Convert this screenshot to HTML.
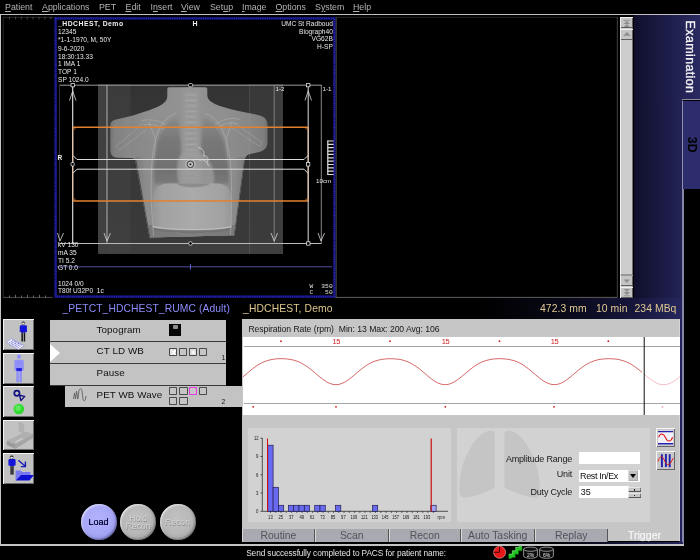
<!DOCTYPE html>
<html><head><meta charset="utf-8"><title>Examination</title>
<style>
html,body{margin:0;padding:0;background:#000;}
body{will-change:transform;width:700px;height:560px;position:relative;overflow:hidden;font-family:"Liberation Sans",sans-serif;color:#c0c0c0;}
.a{position:absolute;white-space:nowrap;}
.menu{position:absolute;top:1.8px;font-size:8.8px;line-height:11px;color:#b4b4b4;white-space:nowrap;}
.menu u{text-decoration:underline;}
.it{position:absolute;font-size:6.6px;line-height:8px;color:#e8e8e8;white-space:nowrap;}
.row{position:absolute;background:#c3c3c3;height:20.5px;}
.row span{position:absolute;left:46.5px;top:4px;font-size:9.8px;line-height:12px;color:#101010;letter-spacing:0.1px;white-space:nowrap;}
.sq{position:absolute;width:6.3px;height:5.9px;border:1.1px solid #4c4c4c;border-radius:0.8px;background:#c6c6c6;}
.ib{position:absolute;left:3px;width:31px;height:30.7px;background:#c2c2c2;box-shadow:inset 1px 1px 0 #f4f4f4, inset -1px -1px 0 #6a6a6a;}
.tab{position:absolute;top:529px;height:12.5px;background:#a9a9b1;color:#52525a;font-size:10.4px;line-height:13.6px;text-align:center;box-shadow:inset 1px 0 0 #d8d8d8, inset -1px 0 0 #555;}
.lbl{position:absolute;font-size:9px;line-height:12px;color:#202020;text-align:right;white-space:nowrap;letter-spacing:-0.2px;}
.rb{position:absolute;top:504px;width:36px;height:36px;border-radius:50%;font-size:8.6px;text-align:center;}

</style></head>
<body>
<!-- menu bar -->
<div class="menu" style="left:5px"><u>P</u>atient</div>
<div class="menu" style="left:42px"><u>A</u>pplications</div>
<div class="menu" style="left:99px">PET</div>
<div class="menu" style="left:125.5px"><u>E</u>dit</div>
<div class="menu" style="left:150.5px">I<u>n</u>sert</div>
<div class="menu" style="left:181px"><u>V</u>iew</div>
<div class="menu" style="left:210px">Set<u>u</u>p</div>
<div class="menu" style="left:242px"><u>I</u>mage</div>
<div class="menu" style="left:275.5px"><u>O</u>ptions</div>
<div class="menu" style="left:315px">S<u>y</u>stem</div>
<div class="menu" style="left:353px"><u>H</u>elp</div>
<div class="a" style="left:0;top:13.7px;width:700px;height:1.4px;background:#c0c0c0"></div>
<div class="a" style="left:0;top:14px;width:1.1px;height:531px;background:#c4c4c4"></div>

<!-- right navy panel -->
<div class="a" style="left:634px;top:15px;width:66px;height:85px;background:linear-gradient(90deg,#0f0f2b 0%,#1a1a44 40%,#2a2a62 100%)"></div>
<div class="a" style="left:634px;top:100px;width:49px;height:198px;background:linear-gradient(90deg,#0f0f2b 0%,#1a1a43 54%,#232356 100%)"></div>
<div class="a" style="left:682px;top:100px;width:18px;height:89px;background:#2d2d6d;border-left:1.4px solid #9090a8;border-top:1.5px solid #000;box-sizing:border-box"></div>
<div class="a" style="left:682px;top:99px;width:18px;height:1.2px;background:#8c8ca4"></div>
<div class="a" style="left:682px;top:189px;width:1.9px;height:355.5px;background:#8686a6"></div>
<div class="a" style="left:684px;top:16px;width:14px;height:82px;"><div style="position:absolute;left:0;top:0;transform-origin:0 0;transform:translate(13.4px,4.6px) rotate(90deg);font-size:12.4px;letter-spacing:0.42px;-webkit-text-stroke:0.35px #f4f4f4;line-height:14px;color:#f4f4f4;white-space:nowrap;">Examination</div></div>
<div class="a" style="left:684px;top:136px;width:14px;height:20px;"><div style="position:absolute;left:0;top:0;transform-origin:0 0;transform:translate(14.6px,0.8px) rotate(90deg);font-weight:bold;font-size:12.3px;line-height:14px;color:#000;white-space:nowrap;">3D</div></div>

<!-- scrollbar -->
<div class="a" style="left:620.2px;top:17px;width:13.2px;height:280.5px;background:#cdcdcd;box-shadow:inset 1px 0 0 #f0f0f0, inset -1px 0 0 #707070"></div>
<div class="a" style="left:620.2px;top:17px;width:13.2px;height:11.2px;background:#c4c4c4;box-shadow:inset 1px 1px 0 #f0f0f0, inset -1px -1px 0 #606060"></div>
<div class="a" style="left:620.2px;top:28.5px;width:13.2px;height:11.2px;background:#c4c4c4;box-shadow:inset 1px 1px 0 #f0f0f0, inset -1px -1px 0 #606060"></div>
<div class="a" style="left:620.2px;top:275px;width:13.2px;height:11.2px;background:#c4c4c4;box-shadow:inset 1px 1px 0 #f0f0f0, inset -1px -1px 0 #606060"></div>
<div class="a" style="left:620.2px;top:286.5px;width:13.2px;height:11.2px;background:#c4c4c4;box-shadow:inset 1px 1px 0 #f0f0f0, inset -1px -1px 0 #606060"></div>
<svg class="a" style="left:0;top:0" width="700" height="560" viewBox="0 0 700 560">
 <g fill="#8e8e8e">
  <path d="M623.6,24 L630,24 L626.8,21 Z M623.6,27.1 L630,27.1 L626.8,24 Z"/>
  <rect x="623.6" y="19.9" width="6.4" height="0.9"/>
  <path d="M623.3,35.8 L630.5,35.8 L626.9,32 Z"/>
  <path d="M623.6,279.5 L630,279.5 L626.8,283 Z"/>
  <path d="M623.6,289 L630,289 L626.8,292.1 Z M623.6,292.1 L630,292.1 L626.8,295.2 Z"/>
  <rect x="623.6" y="295.4" width="6.4" height="0.9"/>
  <rect x="620.7" y="274.6" width="12" height="0.9" fill="#444"/>
 </g>
</svg>
<svg class="a" style="left:0;top:0" width="700" height="560" viewBox="0 0 700 560">
 <defs>
  <linearGradient id="bgv" x1="0" y1="0" x2="0" y2="1">
   <stop offset="0" stop-color="#333333"/><stop offset="0.3" stop-color="#373737"/><stop offset="1" stop-color="#3a3a3a"/>
  </linearGradient>
  <linearGradient id="bodyh" x1="110" y1="0" x2="268" y2="0" gradientUnits="userSpaceOnUse">
   <stop offset="0" stop-color="#707070"/><stop offset="0.03" stop-color="#7e7e7e"/><stop offset="0.12" stop-color="#878787"/><stop offset="0.3" stop-color="#8e8e8e"/><stop offset="0.5" stop-color="#949494"/><stop offset="0.7" stop-color="#8e8e8e"/><stop offset="0.88" stop-color="#878787"/><stop offset="0.97" stop-color="#7e7e7e"/><stop offset="1" stop-color="#707070"/>
  </linearGradient>
  <linearGradient id="torsoh" x1="135" y1="0" x2="245" y2="0" gradientUnits="userSpaceOnUse">
   <stop offset="0" stop-color="#7a7a7a"/><stop offset="0.1" stop-color="#8c8c8c"/><stop offset="0.5" stop-color="#969696"/><stop offset="0.9" stop-color="#8c8c8c"/><stop offset="1" stop-color="#7a7a7a"/>
  </linearGradient>
  <linearGradient id="domeh" x1="153" y1="0" x2="232" y2="0" gradientUnits="userSpaceOnUse">
   <stop offset="0" stop-color="#969696"/><stop offset="0.12" stop-color="#a2a2a2"/><stop offset="0.5" stop-color="#aaaaaa"/><stop offset="0.88" stop-color="#a2a2a2"/><stop offset="1" stop-color="#969696"/>
  </linearGradient>
  <linearGradient id="lungv" x1="0" y1="118" x2="0" y2="184" gradientUnits="userSpaceOnUse"><stop offset="0" stop-color="#707070" stop-opacity="0.3"/><stop offset="0.35" stop-color="#666666" stop-opacity="0.6"/><stop offset="0.8" stop-color="#626262" stop-opacity="0.68"/><stop offset="1" stop-color="#686868" stop-opacity="0.55"/></linearGradient>
  <radialGradient id="lungL" cx="0.55" cy="0.55" r="0.6"><stop offset="0" stop-color="#606060"/><stop offset="0.7" stop-color="#6a6a6a"/><stop offset="1" stop-color="#767676"/></radialGradient>
  <filter id="b1" x="-20%" y="-20%" width="140%" height="140%"><feGaussianBlur stdDeviation="1"/></filter>
  <filter id="b2" x="-20%" y="-20%" width="140%" height="140%"><feGaussianBlur stdDeviation="1.6"/></filter>
  <filter id="b3" x="-30%" y="-30%" width="160%" height="160%"><feGaussianBlur stdDeviation="5"/></filter>
  <clipPath id="bodyclip"><path d="M169,87.3 Q167.3,87.3 167.3,89 L167.3,96 C167.5,103 160,106 150,110 C140,113.5 128,117 116,119.5 C112,120.5 110.3,122 110.3,126 L110.3,150 C110.3,155 113,157.5 118,157.8 L131,158 C134,158 135,159.5 135.5,162 L149.5,237.5 L234.5,235.2 L244.5,162 C245,157.5 246,155 250,154 L258,152.3 C264,151 267.5,148 267.5,143 L267.5,125 C267.5,120 265,117 260,115.5 C250,113 240,111.5 232,109.5 C220,106.5 208,103 207.3,96 L207.3,89 Q207.3,87.3 205.5,87.3 Z"/></clipPath>
 </defs>
 <!-- gray detector rect -->
 <rect x="98" y="84.5" width="185" height="169.5" fill="url(#bgv)"/>
 <rect x="98" y="84.5" width="9" height="169.5" fill="#404040"/>
 <rect x="274.5" y="84.5" width="8.5" height="169.5" fill="#3d3d3d"/>
 <rect x="107" y="84.5" width="23.5" height="169.5" fill="#3c3c3c" opacity="0.5"/>
 <rect x="249.5" y="84.5" width="25" height="169.5" fill="#3e3e3e" opacity="0.5"/>
 <rect x="98" y="244" width="185" height="10" fill="#424242" opacity="0.5"/>
 <!-- body -->
 <g clip-path="url(#bodyclip)">
  <rect x="105" y="85" width="170" height="156" fill="url(#bodyh)"/>
  <!-- torso below arms -->
  <path d="M135.3,157 L149.5,238 L234.5,238 L245,157 Z" fill="url(#torsoh)"/>
  <!-- upper chest lighter -->
  <ellipse cx="189" cy="122" rx="50" ry="22" fill="#939393" opacity="0.55" filter="url(#b3)"/>
  <!-- lungs -->
  <g filter="url(#b2)">
  <path d="M177,118 C169,119 162,128 158,140 C154.5,152 153.5,168 154,184 L182,184 C182,160 182,135 177,118 Z" fill="url(#lungv)"/>
  <path d="M204,118 C212,119 219,128 223,140 C227,152 229,168 229,184 L201,184 C201,160 200,135 204,118 Z" fill="url(#lungv)"/>
  </g>
  <!-- spine -->
  <rect x="181.5" y="87" width="19" height="150" fill="#9a9a9a" opacity="0.5" filter="url(#b1)"/>
  <g stroke="#b8b8b8" stroke-width="0.7" opacity="0.35">
   <path d="M184,95H198M184,100.5H198M184,106H198M184,111.5H198M184,117H198M184,122.5H198M184,128H198M184,133.5H198M184,139H198M184,144.5H198M184,150H198M184,155.5H198M184,161H198M184,166.5H198M184,172H198M184,177.5H198M185,192H197M185,197.5H197M185,203H197M185,208.5H197M185,214H197M185,219.5H197"/>
   <path d="M186,92V225 M196,92V225" stroke-width="0.5"/>
  </g>
  <g fill="#b0b0b0" opacity="0.28"><rect x="186.5" y="93" width="9" height="3.6" rx="0.8"/><rect x="186.5" y="98.5" width="9" height="3.6" rx="0.8"/><rect x="186.5" y="104" width="9" height="3.6" rx="0.8"/><rect x="186.5" y="109.5" width="9" height="3.6" rx="0.8"/><rect x="186.5" y="115" width="9" height="3.6" rx="0.8"/><rect x="186.5" y="120.5" width="9" height="3.6" rx="0.8"/><rect x="186.5" y="126" width="9" height="3.6" rx="0.8"/><rect x="186.5" y="131.5" width="9" height="3.6" rx="0.8"/><rect x="186.5" y="137" width="9" height="3.6" rx="0.8"/><rect x="186.5" y="142.5" width="9" height="3.6" rx="0.8"/><rect x="186.5" y="148" width="9" height="3.6" rx="0.8"/><rect x="186.5" y="153.5" width="9" height="3.6" rx="0.8"/><rect x="186.5" y="171.5" width="9" height="3.6" rx="0.8"/><rect x="186.5" y="177" width="9" height="3.6" rx="0.8"/><rect x="186.5" y="190.5" width="9" height="3.6" rx="0.8"/><rect x="186.5" y="196" width="9" height="3.6" rx="0.8"/><rect x="186.5" y="201.5" width="9" height="3.6" rx="0.8"/><rect x="186.5" y="207" width="9" height="3.6" rx="0.8"/><rect x="186.5" y="212.5" width="9" height="3.6" rx="0.8"/><rect x="186.5" y="218" width="9" height="3.6" rx="0.8"/></g>
  <!-- heart -->
  <path d="M177.5,162 C176.5,172 177,182 181,186.5 C190,190 205,189.5 212.5,186 C215.5,180 214.5,168 208.5,160 C204,154 199,151 193,151 C185,151 178.5,154 177.5,162 Z" fill="#9c9c9c" opacity="0.8" filter="url(#b1)"/>
  <!-- below-dome shade -->
  <path d="M148,225 L236,225 L235,239 L149,239 Z" fill="#767676" opacity="0.8"/>
  <!-- abdomen dome -->
  <path d="M152.7,226.8 L152.7,202 C152.7,190 158,183.8 168,183.6 L217,183.6 C227,183.8 231.7,190 231.7,202 L231.7,226.8 C215,230.8 170,230.8 152.7,226.8 Z" fill="url(#domeh)"/>
  <path d="M177,183.5 C180,188.5 205,188.5 210,183.5 Z" fill="#858585" opacity="0.8"/>
  <path d="M152.7,226.6 C170,230.6 215,230.6 231.7,226.6" fill="none" stroke="#bcbcbc" stroke-width="1.1"/>
  <path d="M154,229.5 C172,233 213,233 230.5,229.5" fill="none" stroke="#6a6a6a" stroke-width="1" opacity="0.7"/>
  <path d="M175,231.5 C179,236.5 205,236.5 209,231.5" fill="none" stroke="#8e8e8e" stroke-width="0.6"/>
  <!-- torso dark edges -->
  <path d="M135.3,159 L149.5,238 M245,159 L234.6,236" stroke="#4a4a4a" stroke-width="1.6" fill="none"/>
  <!-- rib cage outline -->
  <g fill="none" stroke="#c0c0c0" stroke-width="0.8" opacity="0.55">
   <path d="M176,113.5 C166,116 159,126 155.5,140 C151.5,155 150.5,178 151.5,205 L153.5,236"/>
   <path d="M205,113.5 C215,116 222,126 226,140 C231,155 232,178 231.5,205 L230.5,235"/>
   <path d="M116,146.4 L142.8,123.6 M119.6,150 L146.4,129.5 M116,146.4 L119.6,150" stroke-width="0.7" opacity="0.8"/>
   <path d="M262,142.5 L234,122.5 M259.5,146.5 L231,127 M262,142.5 L259.5,146.5" stroke-width="0.7" opacity="0.8"/>
   <path d="M141,121 C150,118.5 158,120 166,125 M144,125 C152,123.5 159,125.5 165,130 M149,122 L155,138 C156,146 155,150 154,158" stroke-width="0.7"/>
   <path d="M240,119.5 C231,117 223,119 215,124.5 M237,123.5 C229,122 222,124.5 216,129 M232,121 L227,137 C226,146 227,150 228,158" stroke-width="0.7"/>
  </g>
  <!-- heart wires -->
  <path d="M198,147.5 C203,148.5 205,152 203.5,156 C207,155 209.5,158.5 207,162.5 M199.5,160.5 C203,158.5 207,161 208.5,166" fill="none" stroke="#e0e0e0" stroke-width="0.8" opacity="0.85"/>
 </g>
 <!-- vertical faint lines over image -->
 <rect x="107.5" y="84.5" width="23" height="169.5" fill="#fff" opacity="0.025"/>
 <rect x="249" y="84.5" width="0.8" height="169.5" fill="#aaa" opacity="0.22"/>

 <!-- FOV boxes -->
 <g fill="none" stroke="#9a9a9a" stroke-width="1">
  <path d="M59,85.2 H321.5"/>
  <path d="M59,243.5 H321.5" stroke="#b8b8b8"/>
  <path d="M107,85 V243.5" stroke="#b0b0b0"/>
  <path d="M274.2,85 V243.5" stroke="#909090" stroke-width="0.8"/>
  <path d="M321.3,85 V243.5" stroke="#a8a8a8" stroke-width="0.8"/>
  <path d="M59.5,85 V243.5" stroke="#303030"/>
 </g>
 <!-- white scan range lines -->
 <g fill="none" stroke="#e8e8e8" stroke-width="1.1">
  <path d="M72.7,85 V243.5"/>
  <path d="M308.2,85 V243.5" stroke="#c8c8c8"/>
  <path d="M73,155.5 L77,159.5 H304 L308,155.5" stroke="#dcdcdc" stroke-width="1"/>
  <path d="M73,173.2 L77,169.2 H304 L308,173.2" stroke="#dcdcdc" stroke-width="1"/>
 </g>
 <!-- orange box -->
 <g fill="none" stroke="#e2812f" stroke-width="1.5">
  <path d="M72.7,127.3 H308.2 M72.7,201 H308.2"/>
 </g>
 <g fill="none" stroke="#e6c8ac" stroke-width="1.1">
  <path d="M72.7,127.3 V201 M308.2,127.3 V201" />
 </g>
 <g fill="none" stroke="#e2812f" stroke-width="0.8">
  <path d="M73,130.5 L76,127.5 M308,130.5 L305,127.5 M73,197.5 L76,200.5 M308,197.5 L305,200.5"/>
 </g>
 <!-- arrows -->
 <g fill="none" stroke="#d8d8d8" stroke-width="0.8">
  <path d="M69.5,100.5 L72.7,91 L76,100.5"/>
  <path d="M305,100.5 L308.2,91 L311.5,100.5"/>
  <path d="M57.5,233 L60,241 L63.5,233"/>
  <path d="M104,233 L107,241 L110.5,233"/>
  <path d="M271,233 L274.2,241 L277.5,233"/>
  <path d="M318,233 L321,241 L324.5,233"/>
 </g>
 <!-- handles -->
 <g fill="#000" stroke="#e0e0e0" stroke-width="0.8">
  <rect x="71" y="83.6" width="3.4" height="3.2"/>
  <rect x="188.6" y="83.6" width="4" height="3.2" rx="1"/>
  <rect x="306.5" y="83.6" width="3.4" height="3.2"/>
  <rect x="71" y="162.5" width="3.2" height="3.6" rx="1"/>
  <rect x="306.6" y="162.5" width="3.2" height="3.6"/>
  <rect x="306.6" y="241.8" width="3.4" height="3.4"/>
  <circle cx="190.5" cy="243.5" r="1.8"/>
 </g>
 <!-- center marker -->
 <g fill="none" stroke="#222" stroke-width="0.7">
  <circle cx="190.4" cy="164.3" r="4.6" stroke="#d0d0d0"/>
  <circle cx="190.4" cy="164.3" r="3.3" stroke="#202020"/>
  <circle cx="190.4" cy="164.3" r="2.1" stroke="#e0e0e0"/>
  <circle cx="190.4" cy="164.3" r="0.8" fill="#111" stroke="none"/>
 </g>
 <!-- bottom blue line -->
 <rect x="57" y="266.3" width="275" height="1" fill="#5050a0"/>
 <rect x="190" y="264" width="1" height="5.5" fill="#6060c0"/>
 <!-- scale ruler (drawn after border below) -->
 <!-- blue dotted border -->
 <rect x="55.6" y="18.4" width="278.8" height="278.2" fill="none" stroke="#0e0e60" stroke-width="2.8"/>
 <rect x="55.6" y="18.4" width="278.8" height="278.2" fill="none" stroke="#2828b8" stroke-width="1.8" stroke-dasharray="1.1 1.1"/>
 <path d="M336.2,17 V297.5" stroke="#505050" stroke-width="0.9" fill="none"/>
 <path d="M336,17.3 H618" stroke="#303030" stroke-width="0.8" fill="none"/>
 <path d="M335.5,297.4 H617.5" stroke="#686868" stroke-width="0.9" fill="none"/>
 <path d="M617.3,17 V297.5" stroke="#484848" stroke-width="0.9" fill="none"/>
 <g stroke="#dedede" stroke-width="1.2" fill="none">
  <path d="M327.8,140.5 V175"/>
  <path d="M327.5,141H333.6 M327.5,144.4H333.6 M327.5,147.7H333.6 M327.5,151.1H333.6 M327.5,154.4H333.6 M327.5,157.8H333.6 M327.5,161.1H333.6 M327.5,164.5H333.6 M327.5,167.8H333.6 M327.5,171.2H333.6 M327.5,174.5H333.6"/>
 </g>
 <!-- ruler ticks top-left -->
 <g stroke="#5c5c5c" stroke-width="0.7">
  <path d="M3,17.3H53.5" stroke="#3a3a3a"/>
  <path d="M3.3,17V297.5" stroke="#333"/>
  <path d="M9.5,16.8V19.5 M15.4,16.8V19.5 M21.3,16.8V19.5 M27.2,16.8V19.5 M33.1,16.8V19.5 M39,16.8V19.5 M44.9,16.8V19.5 M50.8,16.8V19.5"/>
  <path d="M3,297.4H52.5" stroke="#6a6a6a"/>
  <path d="M9.5,295.5V297.8 M15.5,294.8V297.8 M21.5,295.5V297.8 M27.5,294.8V297.8 M33.5,295.5V297.8 M39.5,294.8V297.8 M45.5,295.5V297.8" stroke="#8a8a8a"/>
 </g>
</svg>
<!-- image text -->
<div class="it" style="left:58px;top:20px;font-weight:bold;font-size:6.8px;letter-spacing:0.5px;color:#f0f0f0">_HDCHEST, Demo</div>
<div class="it" style="left:58px;top:28px">12345</div>
<div class="it" style="left:58px;top:35.5px">*1-1-1970, M, 50Y</div>
<div class="it" style="left:58px;top:44.5px">9-6-2020</div>
<div class="it" style="left:58px;top:52.5px">18:30:13.33</div>
<div class="it" style="left:58px;top:60px">1 IMA 1</div>
<div class="it" style="left:58px;top:67.5px">TOP 1</div>
<div class="it" style="left:58px;top:75.8px">SP 1024.0</div>
<div class="it" style="left:192.6px;top:20.2px;font-weight:bold;font-size:7px;color:#f0f0f0">H</div>
<div class="it" style="right:367.2px;top:20px;text-align:right">UMC St Radboud</div>
<div class="it" style="right:367.2px;top:27.5px;text-align:right">Biograph40</div>
<div class="it" style="right:367.2px;top:35px;text-align:right">VG62B</div>
<div class="it" style="right:367.2px;top:42.5px;text-align:right">H-SP</div>
<div class="it" style="left:57.5px;top:153.5px;font-weight:bold;font-size:6.5px;color:#f0f0f0">R</div>
<div class="it" style="left:275.5px;top:84.8px;font-size:6.2px">1-2</div>
<div class="it" style="left:322.5px;top:84.8px;font-size:6.2px">1-1</div>
<div class="it" style="left:316px;top:177px;font-size:6.2px">10cm</div>
<div class="it" style="left:58px;top:241px">kV 130</div>
<div class="it" style="left:58px;top:249px">mA 35</div>
<div class="it" style="left:58px;top:256.7px">TI 5.2</div>
<div class="it" style="left:58px;top:264px">GT 0.0</div>
<div class="it" style="left:58px;top:279.8px">1024 0/0</div>
<div class="it" style="left:58px;top:287.2px">T80f U32P0&nbsp; 1c</div>
<div class="it" style="left:309.6px;top:283.8px;font-size:6.2px;line-height:5.7px;font-family:'Liberation Mono',monospace;letter-spacing:0.15px;color:#e4e4e4">W&nbsp; 350<br>C&nbsp;&nbsp; 50</div>


<!-- header row gradient (right part) -->
<div class="a" style="left:480px;top:298px;width:202px;height:21px;background:linear-gradient(90deg,#000 0%,#070714 35%,#0e0e28 58%,#17173e 78%,#26265e 100%)"></div>
<div class="a" style="left:679px;top:318px;width:3.2px;height:226px;background:#24245a"></div>
<div class="a" style="left:242px;top:541.5px;width:441px;height:2.7px;background:linear-gradient(90deg,#000 0%,#000 70%,#15153c 88%,#24245a 100%)"></div>
<div class="a" style="left:0;top:544.3px;width:683.8px;height:1.3px;background:#c4c4c4"></div>
<div class="a" style="left:62.5px;top:302px;font-size:10.3px;line-height:13px;color:#8c8cfc;letter-spacing:0.1px">_PETCT_HDCHEST_RUMC (Adult)</div>
<div class="a" style="left:243px;top:302px;font-size:10.3px;line-height:13px;color:#e0c890;letter-spacing:0.15px">_HDCHEST, Demo</div>
<div class="a" style="left:540px;top:302px;font-size:10.4px;line-height:13px;color:#e0c890;letter-spacing:0.05px">472.3 mm</div>
<div class="a" style="left:596px;top:302px;font-size:10.4px;line-height:13px;color:#e0c890;letter-spacing:0.05px">10 min</div>
<div class="a" style="left:634.5px;top:302px;font-size:10.4px;line-height:13px;color:#e0c890;letter-spacing:0.05px">234 MBq</div>

<!-- left icon buttons -->
<div class="ib" style="top:319.2px"></div>
<div class="ib" style="top:353px"></div>
<div class="ib" style="top:386.2px"></div>
<div class="ib" style="top:419.6px"></div>
<div class="ib" style="top:453px"></div>
<svg class="a" style="left:0;top:0" width="700" height="560" viewBox="0 0 700 560">
 <!-- icon 1: person + keyboard -->
 <g>
  <circle cx="23.3" cy="323.2" r="1.5" fill="#f0f0f0" stroke="#111" stroke-width="0.5"/><path d="M21.9,322.6 A1.5,1.5 0 0 1 24.7,322.6 Z" fill="#111"/>
  <path d="M20.8,325.3 H25.8 Q26.8,325.3 26.9,326.5 L27,332 H25.7 L25.6,328.5 V332.8 H21 V328.5 L20.9,332 H19.7 L19.8,326.5 Q19.9,325.3 20.8,325.3 Z" fill="#1414d8"/>
  <path d="M21.4,332.8 H22.9 V341.5 H21.4 Z M23.7,332.8 H25.2 V341.5 H23.7 Z" fill="#141414"/>
  <path d="M6.3,342.3 L11.5,338.6 L24.3,345.6 L18.6,349.4 Z" fill="#f6f6fc" stroke="#7070d8" stroke-width="0.5"/>
  <path d="M9.2,342.3 L18.8,347.5 M10.8,341.2 L20.5,346.4 M12.3,340.2 L22,345.3" stroke="#4040c0" stroke-width="0.8" stroke-dasharray="1.1 0.5"/>
 </g>
 <!-- icon 2: light-blue person -->
 <g fill="#9090f8">
  <circle cx="19" cy="356.7" r="2.1"/>
  <path d="M15.8,359.8 H22.4 Q23.8,359.8 23.8,361.3 V370.5 H21.9 V382.3 H19.4 V372 H18.8 V382.3 H16.3 V370.5 H14.4 V361.3 Q14.4,359.8 15.8,359.8 Z"/>
 </g>
 <path d="M16.3,368 H21.9 V371 H16.3 Z" fill="#2424dc"/>
 <path d="M17.5,363.5 h1 M19.8,363.5 h1" stroke="#7070e0" stroke-width="0.7"/>
 <!-- icon 3: marker + green ball -->
 <circle cx="16.9" cy="393.3" r="2.6" fill="none" stroke="#101080" stroke-width="1.7"/>
 <path d="M19.6,395.2 L24.7,396.4 L20.9,400.6 Z" fill="none" stroke="#101080" stroke-width="1.4" stroke-linejoin="round"/>
 <circle cx="18.8" cy="409" r="5.3" fill="#2ad82a"/>
 <circle cx="18" cy="408" r="3" fill="#7cf47c" opacity="0.75" filter="url(#ib1)"/>
 <defs><filter id="ib1"><feGaussianBlur stdDeviation="0.9"/></filter></defs>
 <!-- icon 4: greyed scanner table -->
 <g stroke="#a2a2a2" stroke-width="0.3">
  <path d="M19,422.3 L23.8,424.3 V433.5 L19,431.3 Z" fill="#b2b2b2"/>
  <path d="M23.8,424.3 L24.8,423.9 V432.8 L23.8,433.5 Z" fill="#d0d0d0"/>
  <path d="M7,441 L26,431.8 L33,434.6 L15.5,444.8 Z" fill="#b0b0b0"/>
  <path d="M7,441 L15.5,444.8 V448.8 L7,445 Z" fill="#9a9a9a"/>
  <path d="M15.5,444.8 L33,434.6 V437.6 L15.5,448.8 Z" fill="#a4a4a4"/>
  <path d="M14,442 L22,437.8 L24,438.8 L16,443 Z" fill="#d4d4d4" opacity="0.8"/>
 </g>
 <!-- icon 5: person to folder -->
 <g>
  <circle cx="11.7" cy="457.3" r="1.6" fill="#f0f0f0" stroke="#111" stroke-width="0.5"/><path d="M10.2,456.7 A1.6,1.6 0 0 1 13.2,456.7 Z" fill="#111"/>
  <path d="M9.4,459 H14.5 Q15.5,459 15.6,460.2 V465.5 H14.4 L14.3,462 V466.2 H9.6 V462 L9.5,465.5 H8.4 V460.2 Q8.5,459 9.4,459 Z" fill="#1414d8"/>
  <path d="M10.3,466.2 H13.8 V474.6 H10.3 Z" fill="#3c3c3c"/>
  <path d="M18.3,460.3 L25,466 M25.4,461.6 V466.6 H20.8" fill="none" stroke="#1c1cb8" stroke-width="1.4"/>
  <path d="M15.6,480.4 V470.5 H21 L22,472 H30.4 V475 H21 Z" fill="#7878f0"/>
  <path d="M15.6,480.4 L21,475 H33.9 L29.5,480.4 Z" fill="#1010d0"/>
 </g>
</svg>


<!-- protocol rows -->
<div class="row" style="left:50px;top:320px;width:176px"><span style="top:3.6px">Topogram</span></div>
<div class="row" style="left:50px;top:342px;width:176px"><span style="top:3.4px">CT LD WB</span></div>
<div class="row" style="left:50px;top:364px;width:176px"><span style="top:3.4px">Pause</span></div>
<div class="row" style="left:65px;top:386px;width:176.5px"><span style="left:31.5px;top:2.8px">PET WB Wave</span></div>
<div class="a" style="left:50px;top:340.5px;width:176px;height:1.5px;background:#3a3a3a"></div>
<div class="a" style="left:50px;top:362.5px;width:176px;height:1.5px;background:#3a3a3a"></div>
<div class="a" style="left:50px;top:384.5px;width:176px;height:1.5px;background:#3a3a3a"></div>
<div class="a" style="left:50px;top:343.5px;width:0;height:0;border-left:10.5px solid #fff;border-top:9.3px solid transparent;border-bottom:9.3px solid transparent"></div>
<div class="a" style="left:169.4px;top:324.3px;width:11.6px;height:11.4px;background:#060606"></div>
<div class="a" style="left:173.2px;top:325.4px;width:4.6px;height:4px;background:#8c8c8c;border-radius:1px"></div>
<div class="sq" style="left:169.1px;top:348.2px;background:#dedede"></div>
<div class="sq" style="left:179.1px;top:348.2px"></div>
<div class="sq" style="left:189.1px;top:348.2px;background:#dedede"></div>
<div class="sq" style="left:199px;top:348.2px"></div>
<div class="a" style="left:171px;top:350.2px;width:4.6px;height:4.4px;background:linear-gradient(45deg,transparent 40%,#fff 40%,#fff 60%,transparent 60%),linear-gradient(-45deg,transparent 40%,#fff 40%,#fff 60%,transparent 60%)"></div>
<div class="a" style="left:191.6px;top:351px;width:3.6px;height:3px;border-radius:50%;background:#f8f8f8"></div>
<div class="sq" style="left:169.1px;top:387.1px"></div>
<div class="sq" style="left:179.3px;top:387.1px"></div>
<div class="sq" style="left:188.9px;top:386.6px;border:1.5px solid #e03ce0;width:5.8px;height:6.1px;background:#ccc4cc"></div>
<div class="sq" style="left:199.2px;top:387.1px;width:5.5px"></div>
<div class="sq" style="left:169.1px;top:397.2px"></div>
<div class="sq" style="left:179.3px;top:397.2px"></div>
<div class="a" style="left:221.6px;top:353.8px;font-size:6.8px;line-height:8px;color:#181818">1</div>
<div class="a" style="left:221.6px;top:397.5px;font-size:6.8px;line-height:8px;color:#181818">2</div>
<svg class="a" style="left:72px;top:388px" width="18" height="14" viewBox="0 0 18 14"><path d="M1.5,11 L2.5,5 L3.5,11 L4.5,3 L5.8,11 L7,2.5 C8,0 9.5,0 10,3 L11,11 C11.5,13.5 13,13.5 13.5,11 L14,8" fill="none" stroke="#606060" stroke-width="0.9"/></svg>

<!-- round buttons -->
<div class="rb" style="left:80.5px;background:radial-gradient(circle at 46% 42%,#b2b2fc 0%,#a8a8f8 50%,#9a9aea 74%,#8282d0 90%,#5c5c9c 100%);color:#0a0a38;line-height:36.5px;font-size:9px;text-shadow:0 0 0.4px #0a0a38;box-shadow:inset 1.2px 1.2px 1.5px rgba(255,255,255,0.55), inset -1.2px -1.2px 2px rgba(0,0,40,0.35)">Load</div>
<div class="rb" style="left:120.1px;background:radial-gradient(circle at 46% 42%,#c2c2c2 0%,#b8b8b8 50%,#a8a8a8 74%,#929292 90%,#666 100%);color:#d6d6d6;line-height:8.6px;text-shadow:0.5px 0.5px 0 #888;box-shadow:inset 1.2px 1.2px 1.5px rgba(255,255,255,0.6), inset -1.2px -1.2px 2px rgba(0,0,0,0.3)"><div style="padding-top:9.6px">Hold<br>Recon</div></div>
<div class="rb" style="left:159.5px;background:radial-gradient(circle at 46% 42%,#c2c2c2 0%,#b8b8b8 50%,#a8a8a8 74%,#929292 90%,#666 100%);color:#d6d6d6;line-height:36.5px;text-shadow:0.5px 0.5px 0 #888;box-shadow:inset 1.2px 1.2px 1.5px rgba(255,255,255,0.6), inset -1.2px -1.2px 2px rgba(0,0,0,0.3)">Recon</div>

<!-- main gray panel -->
<div class="a" style="left:242.4px;top:318.8px;width:438px;height:222.7px;background:#c6c6c6;box-shadow:inset -1px 0 0 #d6d6d6"></div>
<div class="a" style="left:248.5px;top:322.8px;font-size:8.65px;line-height:12px;color:#181818;letter-spacing:-0.12px;word-spacing:0.3px">Respiration Rate (rpm)&nbsp; Min: 13 Max: 200 Avg: 106</div>
<div class="a" style="left:243.3px;top:336.9px;width:436.3px;height:78.1px;background:#fff"></div>
<div class="a" style="left:243.5px;top:345.5px;width:436px;height:1px;background:#a4a4a4"></div>
<div class="a" style="left:243.5px;top:402.8px;width:436px;height:1px;background:#a4a4a4"></div>
<svg class="a" style="left:0;top:0" width="700" height="560" viewBox="0 0 700 560">
 <path d="M243,376.8 L246,374.3 L249,371.7 L252,369.2 L255,367.0 L258,364.9 L261,363.2 L264,361.8 L267,360.7 L270,359.9 L273,359.3 L276,358.9 L279,358.7 L282,358.7 L285,358.8 L288,359.1 L291,359.6 L294,360.2 L297,361.2 L300,362.4 L303,364.0 L306,365.9 L309,368.0 L312,370.4 L315,372.9 L318,375.5 L321,377.9 L324,380.2 L327,382.1 L330,383.5 L333,384.4 L336,384.7 L339,384.4 L342,383.4 L345,382.0 L348,380.0 L351,377.8 L354,375.3 L357,372.7 L360,370.2 L363,367.9 L366,365.7 L369,363.9 L372,362.3 L375,361.1 L378,360.2 L381,359.5 L384,359.1 L387,358.8 L390,358.7 L393,358.8 L396,359.0 L399,359.3 L402,359.9 L405,360.8 L408,361.9 L411,363.3 L414,365.1 L417,367.1 L420,369.4 L423,371.9 L426,374.4 L429,377.0 L432,379.3 L435,381.4 L438,383.0 L441,384.1 L444,384.7 L447,384.6 L450,383.9 L453,382.6 L456,380.8 L459,378.7 L462,376.3 L465,373.8 L468,371.2 L471,368.8 L474,366.5 L477,364.6 L480,362.9 L483,361.6 L486,360.5 L489,359.8 L492,359.2 L495,358.9 L498,358.7 L501,358.7 L504,358.9 L507,359.2 L510,359.7 L513,360.4 L516,361.4 L519,362.7 L522,364.3 L525,366.3 L528,368.5 L531,370.9 L534,373.4 L537,376.0 L540,378.4 L543,380.6 L546,382.4 L549,383.7 L552,384.5 L555,384.7 L558,384.2 L561,383.2 L564,381.6 L567,379.6 L570,377.3 L573,374.8 L576,372.2 L579,369.7 L582,367.4 L585,365.3 L588,363.5 L591,362.1 L594,360.9 L597,360.0 L600,359.4 L603,359.0 L606,358.8 L609,358.7 L612,358.8 L615,359.0 L618,359.4 L621,360.1 L624,361.0 L627,362.2 L630,363.6 L633,365.5 L636,367.6 L639,369.9 L642,372.4" fill="none" stroke="#cc4444" stroke-width="0.8"/>
 <path d="M644,374.1 L646,375.8 L648,377.4 L650,379.0 L652,380.4 L654,381.7 L656,382.8 L658,383.7 L660,384.3 L662,384.6 L664,384.7 L666,384.5 L668,384.0 L670,383.3 L672,382.3 L674,381.1 L676,379.7 L678,378.2 L680,376.6" fill="none" stroke="#f0b0b8" stroke-width="0.8"/>
 <rect x="643.7" y="337" width="1" height="78" fill="#111"/>
 <g fill="#d01818">
  <circle cx="281" cy="341.2" r="0.9"/><circle cx="390" cy="341.2" r="0.9"/><circle cx="499.5" cy="341.2" r="0.9"/><circle cx="608.3" cy="341.2" r="0.9"/>
  <circle cx="253.2" cy="406.8" r="0.9"/><circle cx="336" cy="406.8" r="0.9"/><circle cx="445.3" cy="406.8" r="0.9"/><circle cx="554" cy="406.8" r="0.9"/>
  <circle cx="662.5" cy="406.8" r="0.9" fill="#f0a0a8"/>
 </g>
 <g fill="#cc2020" font-family="Liberation Sans, sans-serif" font-size="7.5" text-anchor="middle" letter-spacing="-0.3">
  <text x="336.3" y="344.3">15</text><text x="445.5" y="344.3">15</text><text x="554.5" y="344.3">15</text>
 </g>
</svg>

<!-- histogram box -->
<div class="a" style="left:247.9px;top:428.1px;width:202.8px;height:93.7px;background:#d2d2d2"></div>
<svg class="a" style="left:0;top:0" width="700" height="560" viewBox="0 0 700 560">
 <g stroke="#181818" stroke-width="0.7" fill="none">
  <path d="M262.3,438 V511.3 H448"/>
  <path d="M260.5,438.2H262.3 M260.5,456.5H262.3 M260.5,474.8H262.3 M260.5,493H262.3 M260.5,511.3H262.3"/>
  <path d="M270.5,511.3v1.5 M275.8,511.3v1.5 M281,511.3v1.5 M286.3,511.3v1.5 M291.5,511.3v1.5 M296.8,511.3v1.5 M302,511.3v1.5 M307.3,511.3v1.5 M312.5,511.3v1.5 M317.8,511.3v1.5 M323,511.3v1.5 M328.3,511.3v1.5 M333.5,511.3v1.5 M338.8,511.3v1.5 M344,511.3v1.5 M349.3,511.3v1.5 M354.5,511.3v1.5 M359.8,511.3v1.5 M365,511.3v1.5 M370.3,511.3v1.5 M375.5,511.3v1.5 M380.8,511.3v1.5 M386,511.3v1.5 M391.3,511.3v1.5 M396.5,511.3v1.5 M401.8,511.3v1.5 M407,511.3v1.5 M412.3,511.3v1.5 M417.5,511.3v1.5 M422.8,511.3v1.5 M428,511.3v1.5 M433.3,511.3v1.5"/>
 </g>
 <g fill="#6a6af0" stroke="#202050" stroke-width="0.7">
  <rect x="267.8" y="445.2" width="5.3" height="66.1"/>
  <rect x="273.1" y="487.3" width="5.3" height="24"/>
  <rect x="278.4" y="505.3" width="5.3" height="6"/>
  <rect x="288.4" y="505.3" width="5.3" height="6"/><rect x="293.7" y="505.3" width="5.3" height="6"/><rect x="299" y="505.3" width="5.3" height="6"/><rect x="304.3" y="505.3" width="5.3" height="6"/>
  <rect x="314.7" y="505.3" width="5.3" height="6"/><rect x="320" y="505.3" width="5.3" height="6"/>
  <rect x="335.5" y="505.3" width="5.3" height="6"/>
  <rect x="372.4" y="505.3" width="5.3" height="6"/>
  <rect x="430.8" y="505.3" width="5.3" height="6" fill="#a4a4f4"/>
 </g>
 <rect x="267" y="438.5" width="1" height="72.8" fill="#d01010"/>
 <rect x="430.6" y="438.5" width="1.2" height="72.8" fill="#c81010"/>
 <g fill="#141414" font-family="Liberation Sans, sans-serif" font-size="5.4">
  <text x="254.0" y="440.2" textLength="4.6" lengthAdjust="spacingAndGlyphs">12</text><text x="256.1" y="458.4" textLength="2.4" lengthAdjust="spacingAndGlyphs">9</text><text x="256.1" y="476.7" textLength="2.4" lengthAdjust="spacingAndGlyphs">6</text><text x="256.1" y="494.9" textLength="2.4" lengthAdjust="spacingAndGlyphs">3</text><text x="256.1" y="513.2" textLength="2.4" lengthAdjust="spacingAndGlyphs">0</text><text x="268.1" y="519.1" textLength="4.6" lengthAdjust="spacingAndGlyphs">13</text><text x="278.5" y="519.1" textLength="4.6" lengthAdjust="spacingAndGlyphs">25</text><text x="289.0" y="519.1" textLength="4.6" lengthAdjust="spacingAndGlyphs">37</text><text x="299.4" y="519.1" textLength="4.6" lengthAdjust="spacingAndGlyphs">49</text><text x="309.8" y="519.1" textLength="4.6" lengthAdjust="spacingAndGlyphs">61</text><text x="320.2" y="519.1" textLength="4.6" lengthAdjust="spacingAndGlyphs">73</text><text x="330.7" y="519.1" textLength="4.6" lengthAdjust="spacingAndGlyphs">85</text><text x="341.1" y="519.1" textLength="4.6" lengthAdjust="spacingAndGlyphs">97</text><text x="350.5" y="519.1" textLength="6.6" lengthAdjust="spacingAndGlyphs">109</text><text x="361.0" y="519.1" textLength="6.6" lengthAdjust="spacingAndGlyphs">121</text><text x="371.4" y="519.1" textLength="6.6" lengthAdjust="spacingAndGlyphs">133</text><text x="381.8" y="519.1" textLength="6.6" lengthAdjust="spacingAndGlyphs">145</text><text x="392.3" y="519.1" textLength="6.6" lengthAdjust="spacingAndGlyphs">157</text><text x="402.7" y="519.1" textLength="6.6" lengthAdjust="spacingAndGlyphs">169</text><text x="413.1" y="519.1" textLength="6.6" lengthAdjust="spacingAndGlyphs">181</text><text x="423.5" y="519.1" textLength="6.6" lengthAdjust="spacingAndGlyphs">193</text><text x="437.6" y="519.1" textLength="7.4" lengthAdjust="spacingAndGlyphs">rpm</text>
 </g>
</svg>

<!-- trigger settings box -->
<div class="a" style="left:457px;top:428px;width:193px;height:94px;background:#d2d2d2"></div>
<svg class="a" style="left:0;top:0" width="700" height="560" viewBox="0 0 700 560">
 <g fill="#c5c5c5">
  <path d="M494.8,434 C494.8,431.5 492.5,430.5 489.5,430.8 C481,432 474,441 469.6,449.5 C465,458.5 462.5,464 461.3,471 C460,478 459.3,484 459.3,490 C459.3,495 460.5,497.6 465,497.6 C474,497 486,492 492.5,489 C494.3,488 494.8,487 494.8,485 Z"/>
  <path d="M504.4,434 C504.4,431.5 506.7,430.5 509.7,430.8 C518.2,432 525.2,441 529.6,449.5 C534.2,458.5 536.7,464 537.9,471 C539.2,478 539.9,484 539.9,490 C539.9,495 538.7,497.6 534.2,497.6 C525.2,497 513.2,492 506.7,489 C504.9,488 504.4,487 504.4,485 Z"/>
 </g>
</svg>
<div class="lbl" style="right:128px;top:452.5px">Amplitude Range</div>
<div class="lbl" style="right:128px;top:468px">Unit</div>
<div class="lbl" style="right:128px;top:486px">Duty Cycle</div>
<div class="a" style="left:578.5px;top:452px;width:61px;height:12.3px;background:#fff"></div>
<div class="a" style="left:578.5px;top:470px;width:61px;height:11.5px;background:#fff"></div>
<div class="a" style="left:580px;top:470px;font-size:9px;line-height:12px;color:#101010;letter-spacing:-0.35px">Rest In/Ex</div>
<div class="a" style="left:627.9px;top:470.4px;width:10.3px;height:10.6px;background:#c2c2c2;box-shadow:inset 0.6px 0.6px 0 #e8e8e8, inset -0.6px -0.6px 0 #9a9a9a"></div>
<div class="a" style="left:629.6px;top:474px;width:0;height:0;border-top:4px solid #000;border-left:3.4px solid transparent;border-right:3.4px solid transparent"></div>
<div class="a" style="left:578.5px;top:486.3px;width:50px;height:12px;background:#fff"></div>
<div class="a" style="left:580.7px;top:485.6px;font-size:9px;line-height:12px;color:#101010">35</div>
<div class="a" style="left:628.3px;top:486.7px;width:12.3px;height:5.8px;background:#c6c6c6;box-shadow:inset 0.7px 0.7px 0 #f0f0f0, inset -0.7px -0.9px 0 #555"></div>
<div class="a" style="left:628.3px;top:492.5px;width:12.3px;height:5.8px;background:#c6c6c6;box-shadow:inset 0.7px 0.7px 0 #f0f0f0, inset -0.7px -0.9px 0 #555"></div>
<div class="a" style="left:633.8px;top:489px;width:1.5px;height:1.5px;background:#222"></div>
<div class="a" style="left:633.8px;top:494.6px;width:1.5px;height:1.5px;background:#222"></div>

<!-- side icon buttons -->
<div class="a" style="left:655.6px;top:428px;width:19.9px;height:19px;background:#c8c8c8;box-shadow:inset 1px 1px 0 #f8f8f8, inset -1px -1px 0 #666"></div>
<div class="a" style="left:655.6px;top:451px;width:19.9px;height:19.4px;background:#c8c8c8;box-shadow:inset 1px 1px 0 #f8f8f8, inset -1px -1px 0 #666"></div>
<svg class="a" style="left:0;top:0" width="700" height="560" viewBox="0 0 700 560">
 <rect x="658" y="430.6" width="15.2" height="14" fill="#f0f0f6"/>
 <path d="M658,431.6H673.2 M658,443.7H673.2" stroke="#2424b0" stroke-width="1.4"/>
 <path d="M658.6,437.3 C660,432.8 663.3,432.8 665.3,437.3 C667.3,442.3 670.8,442.3 672.6,437.3" fill="none" stroke="#e01c1c" stroke-width="1.1"/>
 <path d="M661.9,454.3 V467.3 M665.9,454 V467 M669.7,454.3 V467.3" stroke="#2020b0" stroke-width="1.9" fill="none"/>
 <path d="M658,461.5 C659.5,456.5 662,455 664,459.5 C666,464.5 668.5,466.5 670.5,463 L673.3,458" fill="none" stroke="#e01c1c" stroke-width="1"/>
</svg>

<!-- bottom tabs -->
<div class="tab" style="left:242px;width:73px">Routine</div>
<div class="tab" style="left:315px;width:73.5px">Scan</div>
<div class="tab" style="left:388.5px;width:72.5px">Recon</div>
<div class="tab" style="left:461px;width:73.5px">Auto Tasking</div>
<div class="tab" style="left:534.5px;width:73.5px">Replay</div>
<div class="a" style="left:608px;top:529px;width:73px;height:12.5px;font-size:10.6px;line-height:13.6px;color:#f6f6f6;-webkit-text-stroke:0.25px #f6f6f6;text-align:center">Trigger</div>

<!-- status bar -->
<div class="a" style="left:246.2px;top:546.6px;font-size:8.3px;line-height:12px;color:#e4e4e4;letter-spacing:-0.1px">Send successfully completed to PACS for patient name:</div>
<svg class="a" style="left:0;top:0" width="700" height="560" viewBox="0 0 700 560">
 <circle cx="499.6" cy="552.3" r="6" fill="#e81818" stroke="#f0b0b0" stroke-width="0.6"/>
 <path d="M499.6,546.5 V552.3 H493.8" fill="none" stroke="#300000" stroke-width="0.9"/>
 <path d="M508.7,558.6 V554 H512.2 V550.6 H515.6 V547.2 H519 V546.2 H522 V550.8 H518.6 V554.2 H515.2 V557.6 H511.8 V558.6 Z" fill="#22c422" stroke="#0c700c" stroke-width="0.5"/>
 <path d="M508.9,554.2 H512.4 V550.8 H515.8 V547.4 H519.2 V546.4 H521.8" fill="none" stroke="#90f090" stroke-width="0.6"/>
 <g fill="#0c0c0c" stroke="#c8c8c8" stroke-width="0.7">
  <path d="M523.6,549.2 V556 C523.6,559 537.4,559 537.4,556 V549.2"/>
  <ellipse cx="530.5" cy="549.2" rx="6.9" ry="2.1"/>
  <path d="M539.6,549.2 V556 C539.6,559 553.4,559 553.4,556 V549.2"/>
  <ellipse cx="546.5" cy="549.2" rx="6.9" ry="2.1"/>
 </g>
 <g fill="#e8e8e8" font-family="Liberation Sans, sans-serif" font-size="5" text-anchor="middle">
  <text x="530.5" y="556.6">2%</text><text x="546.5" y="556.6">6%</text>
 </g>
</svg>

</body></html>
